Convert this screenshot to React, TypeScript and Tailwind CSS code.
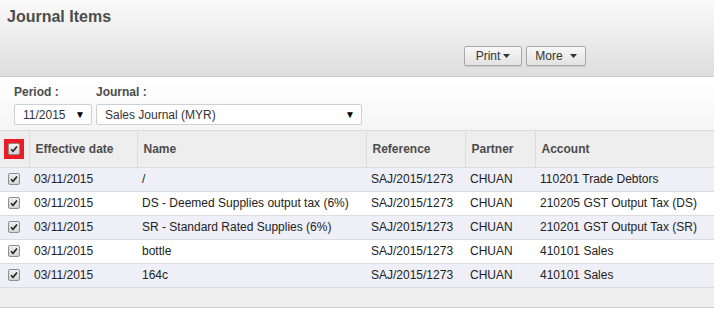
import React from "react";

const rows = [
  { date: "03/11/2015", name: "/", ref: "SAJ/2015/1273", partner: "CHUAN", account: "110201 Trade Debtors" },
  { date: "03/11/2015", name: "DS - Deemed Supplies output tax (6%)", ref: "SAJ/2015/1273", partner: "CHUAN", account: "210205 GST Output Tax (DS)" },
  { date: "03/11/2015", name: "SR - Standard Rated Supplies (6%)", ref: "SAJ/2015/1273", partner: "CHUAN", account: "210201 GST Output Tax (SR)" },
  { date: "03/11/2015", name: "bottle", ref: "SAJ/2015/1273", partner: "CHUAN", account: "410101 Sales" },
  { date: "03/11/2015", name: "164c", ref: "SAJ/2015/1273", partner: "CHUAN", account: "410101 Sales" },
];

const Check = () => (
  <span className="flex w-[12px] h-[12px] items-center justify-center rounded-[2px] border border-[#8f8f8f] bg-gradient-to-b from-[#f0f0f0] to-[#d4d4d4]">
    <svg width="8" height="8" viewBox="0 0 8 8">
      <path d="M1 4.2 L3 6.2 L7 1.5" fill="none" stroke="#222" strokeWidth="1.6" />
    </svg>
  </span>
);

const Caret = () => (
  <svg width="7" height="4" viewBox="0 0 7 4" className="ml-[3px]">
    <path d="M0 0 H7 L3.5 4 Z" fill="#333" />
  </svg>
);

const Select = ({ value, width }: { value: string; width: string }) => (
  <div className={`${width} h-[21px] flex items-center justify-between rounded-[2px] border border-[#cfcfcf] bg-white pl-[8px] pr-[6px] text-[12px] text-[#333]`}>
    <span>{value}</span>
    <span className="text-[10px] text-black">▼</span>
  </div>
);

export default function App() {
  const th = "h-[36px] border-r border-[#dcdcdc] px-[6px] text-left font-bold text-[12px] text-[#4c4c4c]";
  const td = "h-[23px] px-[5px] py-0 text-[12px] leading-[15px] text-[#222] whitespace-nowrap";
  return (
    <div className="w-[714px] h-[309px] overflow-hidden bg-white" style={{ fontFamily: '"Liberation Sans", Arial, sans-serif' }}>
      <div className="h-[77px] flex flex-col border-b border-[#c9c9c9] bg-gradient-to-b from-[#fafafa] to-[#dedede]">
        <h1 className="px-[7px] pt-[5px] text-[16px] font-bold text-[#4c4c4c]">Journal Items</h1>
        <div className="mt-auto mb-[10px] ml-[464px] flex gap-[4px]">
          <button className="h-[20px] w-[58px] flex items-center justify-center rounded-[2px] border border-[#a9a9a9] bg-gradient-to-b from-[#f8f8f8] to-[#e2e2e2] text-[12px] text-[#333] shadow-[0_1px_1px_rgba(0,0,0,0.1)]">
            Print<Caret />
          </button>
          <button className="h-[20px] w-[60px] flex items-center justify-center rounded-[2px] border border-[#a9a9a9] bg-gradient-to-b from-[#f8f8f8] to-[#e2e2e2] text-[12px] text-[#333] shadow-[0_1px_1px_rgba(0,0,0,0.1)]">
            More<span className="w-[4px]" /><Caret />
          </button>
        </div>
      </div>
      <div className="h-[54px] flex gap-[4px] px-[14px] pt-[8px] border-b border-[#dcdcdc] bg-gradient-to-b from-white to-[#f5f5f5]">
        <div className="flex flex-col gap-[4px]">
          <span className="text-[12px] font-bold text-[#4c4c4c] leading-[15px]">Period :</span>
          <Select value="11/2015" width="w-[78px]" />
        </div>
        <div className="flex flex-col gap-[4px]">
          <span className="text-[12px] font-bold text-[#4c4c4c] leading-[15px]">Journal :</span>
          <Select value="Sales Journal (MYR)" width="w-[266px]" />
        </div>
      </div>
      <table className="w-full table-fixed border-collapse">
        <colgroup>
          <col className="w-[29px]" />
          <col className="w-[108px]" />
          <col className="w-[229px]" />
          <col className="w-[99px]" />
          <col className="w-[70px]" />
          <col />
        </colgroup>
        <thead>
          <tr className="bg-[#eeeeee] border-b border-[#dcdcdc]">
            <th className="h-[36px] border-r border-[#dcdcdc] px-0">
              <div className="ml-[4px] w-[20px] h-[20px] flex items-center justify-center bg-[#ec1c24]">
                <Check />
              </div>
            </th>
            <th className={th}>Effective date</th>
            <th className={th}>Name</th>
            <th className={th}>Reference</th>
            <th className={th}>Partner</th>
            <th className="h-[36px] px-[6px] text-left font-bold text-[12px] text-[#4c4c4c]">Account</th>
          </tr>
        </thead>
        <tbody>
          {rows.map((r, i) => (
            <tr key={i} className={`h-[24px] border-b border-[#dcdcdc] ${i % 2 === 0 ? "bg-[#efeff7]" : "bg-white"}`}>
              <td className="h-[23px] py-0 pl-[8px]">
                <div className="flex items-center"><Check /></div>
              </td>
              <td className={td}>{r.date}</td>
              <td className={td}>{r.name}</td>
              <td className={td}>{r.ref}</td>
              <td className={td}>{r.partner}</td>
              <td className={td}>{r.account}</td>
            </tr>
          ))}
        </tbody>
      </table>
      <div className="h-[20px] bg-[#eeeeee] border-b border-[#d0d0d0]" />
    </div>
  );
}
